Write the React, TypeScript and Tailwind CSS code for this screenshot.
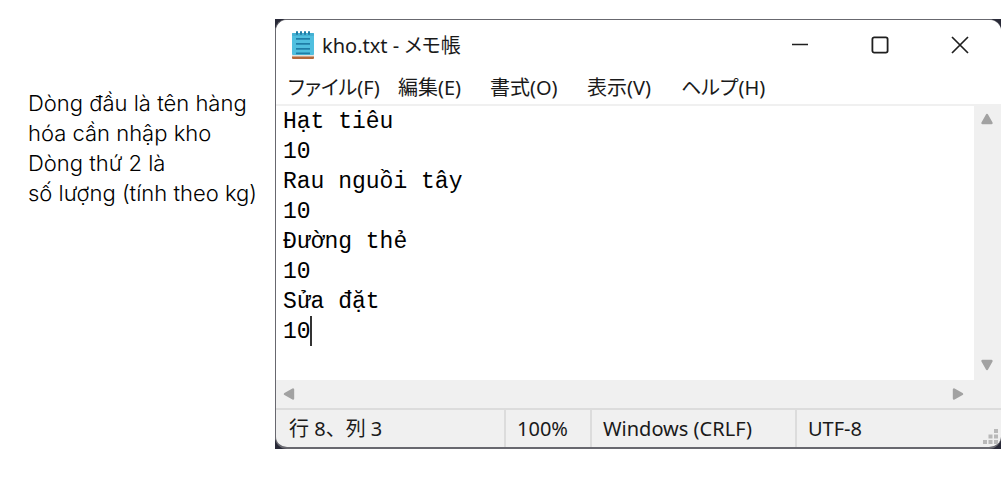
const noteLines = ["Dòng đầu là tên hàng", "hóa cần nhập kho", "Dòng thứ 2 là", "số lượng (tính theo kg)"];

const menus = ["ファイル(F)", "編集(E)", "書式(O)", "表示(V)", "ヘルプ(H)"];

const fileText = ["Hạt tiêu", "10", "Rau nguồi tây", "10", "Đường thẻ", "10", "Sửa đặt", "10"].join("\n");

function NotepadIcon() {
  return (
    <svg width="22" height="28" viewBox="0 0 22 28" aria-hidden="true">
      <rect x="0" y="23" width="22" height="5" rx="1" fill="#b5683a" />
      <rect x="0" y="23" width="22" height="2.5" fill="#e6e2dc" />
      <rect x="0" y="2" width="22" height="22" rx="1" fill="#50bfdf" />
      <rect x="0" y="2" width="22" height="3" rx="1" fill="#45b0d2" />
      <g fill="#1f7da6">
        <rect x="4" y="0" width="2" height="4" rx="1" />
        <rect x="8" y="0" width="2" height="4" rx="1" />
        <rect x="12" y="0" width="2" height="4" rx="1" />
        <rect x="16" y="0" width="2" height="4" rx="1" />
        <rect x="4" y="7" width="14" height="1.7" />
        <rect x="4" y="12" width="14" height="1.7" />
        <rect x="4" y="17" width="14" height="1.7" />
        <rect x="4" y="21.5" width="14" height="1.7" />
      </g>
    </svg>
  );
}

function Arrow({ d }: { d: string }) {
  return (
    <svg className="block" width="14" height="14" viewBox="0 0 14 14" aria-hidden="true">
      <path d={d} fill="#a2a2a2" stroke="#a2a2a2" strokeWidth="2.4" strokeLinejoin="round" />
    </svg>
  );
}

function TitleBar() {
  return (
    <header className="flex h-[50px] items-center justify-between pl-4">
      <div className="flex items-center gap-2">
        <NotepadIcon />
        <h1 className="pt-[2px] text-[20px] leading-7 [font-feature-settings:'palt']">kho.txt - メモ帳</h1>
      </div>
      <div className="flex h-full pr-px">
        <button aria-label="最小化" className="flex w-20 items-center justify-center">
          <svg width="18" height="18" viewBox="0 0 18 18" fill="none" stroke="#1f1f1f" strokeWidth="1.6">
            <path d="M1 8.5H17" />
          </svg>
        </button>
        <button aria-label="最大化" className="flex w-20 items-center justify-center">
          <svg width="18" height="18" viewBox="0 0 18 18" fill="none" stroke="#1f1f1f" strokeWidth="1.8">
            <rect x="1.4" y="1.4" width="15.2" height="15.2" rx="1.8" />
          </svg>
        </button>
        <button aria-label="閉じる" className="flex w-20 items-center justify-center">
          <svg width="18" height="18" viewBox="0 0 18 18" fill="none" stroke="#1f1f1f" strokeWidth="1.7">
            <path d="M1 1L17 17M17 1L1 17" />
          </svg>
        </button>
      </div>
    </header>
  );
}

function StatusBar() {
  return (
    <footer className="grid h-[39px] grid-cols-[230px_86px_205px_1fr] border-t-2 border-[#dcdcdc] text-[20px] leading-[38px]">
      <span className="border-r-2 border-[#dcdcdc] pl-[13px]">行 8、列 3</span>
      <span className="border-r-2 border-[#dcdcdc] pl-[11px]">100%</span>
      <span className="border-r-2 border-[#dcdcdc] pl-[11px]">Windows (CRLF)</span>
      <span className="flex items-start justify-between pl-[11px]">
        UTF-8
        <svg className="mt-[18px]" width="18" height="18" viewBox="0 0 18 18" fill="#b9b9b9" aria-hidden="true">
          <path d="M11 1h4v4h-4zM5.5 6.500h4v4h-4zM11 6.500h4v4h-4zM0 12h4v4h-4zM5.5 12h4v4h-4zM11 12h4v4h-4z" />
        </svg>
      </span>
    </footer>
  );
}

export default function App() {
  return (
    <main className="flex min-h-screen items-start bg-white text-black">
      <p className="w-[275px] shrink-0 pt-[88px] pl-7 font-['Inter',sans-serif] text-[22px] leading-[30px] font-light whitespace-nowrap">
        {noteLines.map((line) => (
          <span key={line} className="block">{line}</span>
        ))}
      </p>
      <div className="mt-[19px] min-w-0 flex-1 bg-[#292a38]">
        <section className="overflow-hidden rounded-xl border border-r-0 border-b-2 border-[#68686f] bg-[#f0f0f0] font-['Noto_Sans','Noto_Sans_CJK_JP',sans-serif] text-[#1a1a1a]">
          <div className="bg-white">
            <TitleBar />
            <nav className="grid h-[34px] grid-cols-[110px_92px_97px_94px_1fr] pl-3 text-[20px] leading-9">
              {menus.map((menu) => (
                <button key={menu} className="text-left whitespace-nowrap [font-feature-settings:'palt']">{menu}</button>
              ))}
            </nav>
          </div>
          <div className="grid grid-cols-[1fr_27px] border-t-2 border-[#f0f0f0]">
            <div className="relative">
              <textarea
                aria-label="kho.txt"
                rows={9}
                spellCheck={false}
                defaultValue={fileText}
                className="block w-full resize-none overflow-hidden bg-white pt-px pb-[3px] pl-[7px] font-['Liberation_Mono',monospace] text-[23px] leading-[30px] text-black outline-none"
              />
              <span className="absolute top-[210px] left-[34px] h-[30px] w-[2px] bg-[#333]" />
            </div>
            <div className="flex flex-col items-center justify-between pt-[6px] pr-[2px] pb-2">
              <button aria-label="上へスクロール"><Arrow d="M7 3L11.5 11H2.5Z" /></button>
              <button aria-label="下へスクロール"><Arrow d="M7 11L11.5 3H2.5Z" /></button>
            </div>
          </div>
          <div className="flex h-7 items-center justify-between pr-9 pl-[6px]">
            <button aria-label="左へスクロール"><Arrow d="M3 7L11 2.5V11.5Z" /></button>
            <button aria-label="右へスクロール"><Arrow d="M11 7L3 2.5V11.5Z" /></button>
          </div>
          <StatusBar />
        </section>
      </div>
    </main>
  );
}
